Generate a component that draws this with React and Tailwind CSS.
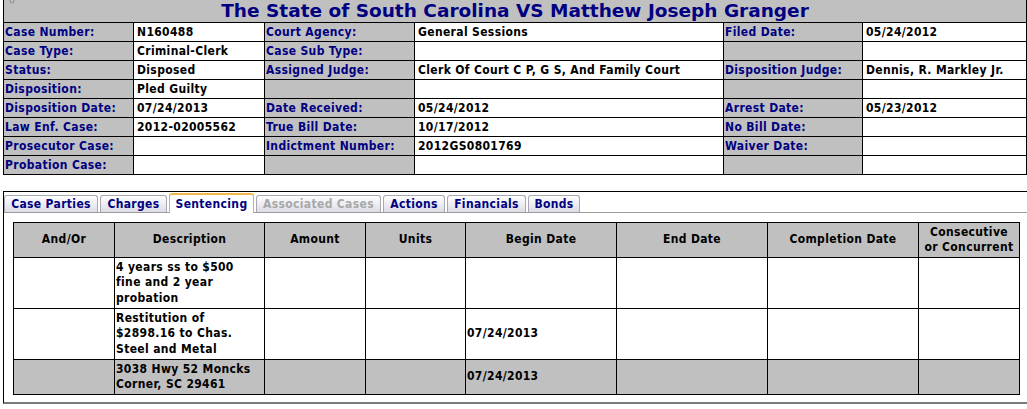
import React from "react";

const rows = [
  ["Case Number:", "N160488", "Court Agency:", "General Sessions", "Filed Date:", "05/24/2012"],
  ["Case Type:", "Criminal-Clerk", "Case Sub Type:", "", "", ""],
  ["Status:", "Disposed", "Assigned Judge:", "Clerk Of Court C P, G S, And Family Court", "Disposition Judge:", "Dennis, R. Markley Jr."],
  ["Disposition:", "Pled Guilty", "", "", "", ""],
  ["Disposition Date:", "07/24/2013", "Date Received:", "05/24/2012", "Arrest Date:", "05/23/2012"],
  ["Law Enf. Case:", "2012-02005562", "True Bill Date:", "10/17/2012", "No Bill Date:", ""],
  ["Prosecutor Case:", "", "Indictment Number:", "2012GS0801769", "Waiver Date:", ""],
  ["Probation Case:", "", "", "", "", ""],
];

const tabs = [
  { label: "Case Parties", w: "w-[94px]" },
  { label: "Charges", w: "w-[67px]" },
  { label: "Sentencing", w: "w-[85px]", active: true },
  { label: "Associated Cases", w: "w-[125px]", disabled: true },
  { label: "Actions", w: "w-[62px]" },
  { label: "Financials", w: "w-[79px]" },
  { label: "Bonds", w: "w-[52px]" },
];

const headers = ["And/Or", "Description", "Amount", "Units", "Begin Date", "End Date", "Completion Date"];

function Cell({ children, gray, left, className = "" }) {
  return (
    <div
      className={`${gray ? "bg-[#c0c0c0]" : "bg-white"} flex items-center ${
        left ? "justify-start pl-px" : "justify-center"
      } text-black leading-[15.5px] ${className}`}
    >
      {children}
    </div>
  );
}

export default function App() {
  return (
    <div className="w-[1027px] h-[409px] overflow-hidden bg-white font-['DejaVu_Sans_Condensed','DejaVu_Sans',sans-serif] font-bold text-[12px] tracking-[0.35px]">
      {/* Case header table */}
      <div className="pl-[3px]">
        <div className="relative w-[1024px] bg-black px-px pb-px grid grid-cols-[129px_130px_149px_308px_138px_163px] grid-rows-[22px_repeat(8,18px)] gap-px">
          <div className="col-span-6 bg-[#c0c0c0] text-center text-[#000080] font-['DejaVu_Sans',sans-serif] tracking-normal text-[18.5px] leading-[22px]">
            The State of South Carolina VS Matthew Joseph Granger
          </div>
          <svg className="absolute left-[6px] top-[-2px]" width="6" height="6" viewBox="0 0 6 6">
            <circle cx="3" cy="3" r="2" fill="none" stroke="#8a8a8a" strokeWidth="1" />
          </svg>
          {rows.map((r, i) =>
            r.map((c, j) => (
              <div
                key={`${i}-${j}`}
                className={
                  j % 2 === 0
                    ? "bg-[#c0c0c0] text-[#000080] pl-[1px] leading-[18px] whitespace-nowrap"
                    : "bg-white text-black pl-[3px] leading-[18px] whitespace-nowrap"
                }
              >
                {c}
              </div>
            ))
          )}
        </div>
      </div>

      {/* Tabs box */}
      <div className="ml-[3px] mt-[16px] w-[1030px] border-t border-l border-black border-b-2 border-b-[#7a7a7a] pb-[7px]">
        <div className="mt-px h-[20px] flex items-end gap-[2px] border-b border-[#9c9c9c]">
          {tabs.map((t) =>
            t.active ? (
              <div
                key={t.label}
                className={`${t.w} h-[20px] -mb-px rounded-t-[3px] border-x border-[#b0b0b0] border-t-2 border-t-[#f2b949] bg-white flex items-center justify-center text-[#000080] text-[12px] whitespace-nowrap`}
              >
                {t.label}
              </div>
            ) : (
              <div
                key={t.label}
                className={`${t.w} h-[17px] rounded-t-[3px] border-x border-t border-[#a8a8b0] bg-linear-to-b from-white to-[#dcdce6] flex items-center justify-center text-[12px] whitespace-nowrap ${
                  t.disabled ? "text-[#a8a8a8]" : "text-[#000080]"
                }`}
              >
                {t.label}
              </div>
            )
          )}
        </div>

        <div className="ml-[9px] mt-[9px] w-[1007px] bg-black p-px grid grid-cols-[100px_149px_100px_99px_150px_150px_150px_100px] grid-rows-[34px_50px_50px_34px] gap-px">
          {headers.map((h) => (
            <Cell key={h} gray className="text-[#000080]">
              {h}
            </Cell>
          ))}
          <Cell gray className="text-[#000080] text-center">
            Consecutive
            <br />
            or Concurrent
          </Cell>

          <Cell />
          <Cell left>
            <span>
              4 years ss to $500
              <br />
              fine and 2 year
              <br />
              probation
            </span>
          </Cell>
          <Cell />
          <Cell />
          <Cell />
          <Cell />
          <Cell />
          <Cell />

          <Cell />
          <Cell left>
            <span>
              Restitution of
              <br />
              $2898.16 to Chas.
              <br />
              Steel and Metal
            </span>
          </Cell>
          <Cell />
          <Cell />
          <Cell left>07/24/2013</Cell>
          <Cell />
          <Cell />
          <Cell />

          <Cell gray />
          <Cell gray left>
            <span>
              3038 Hwy 52 Moncks
              <br />
              Corner, SC 29461
            </span>
          </Cell>
          <Cell gray />
          <Cell gray />
          <Cell gray left>07/24/2013</Cell>
          <Cell gray />
          <Cell gray />
          <Cell gray />
        </div>
      </div>
    </div>
  );
}
